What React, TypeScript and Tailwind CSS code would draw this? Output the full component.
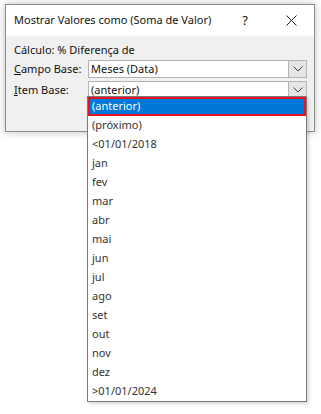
import React from "react"

const items = [
  "(anterior)",
  "(próximo)",
  "<01/01/2018",
  "jan",
  "fev",
  "mar",
  "abr",
  "mai",
  "jun",
  "jul",
  "ago",
  "set",
  "out",
  "nov",
  "dez",
  ">01/01/2024",
]

function Chevron() {
  return (
    <svg width="10" height="6" viewBox="0 0 10 6" className="text-[#444]">
      <path d="M0.5 0.5 L5 5 L9.5 0.5" fill="none" stroke="currentColor" strokeWidth="1" />
    </svg>
  )
}

function Combo({ value }: { value: string }) {
  return (
    <div className="flex h-[18px] w-[219px] border border-[#b4b4b4] bg-white">
      <div className="flex flex-1 items-center pl-[2px] text-[#111]">{value}</div>
      <div className="flex w-[18px] items-center justify-center border-l border-[#b4b4b4] bg-[#e5e5e5]">
        <Chevron />
      </div>
    </div>
  )
}

export default function App() {
  return (
    <div
      className="relative h-[414px] w-[321px] whitespace-nowrap bg-white text-[11px]"
      style={{ fontFamily: '"Noto Sans", "Open Sans", sans-serif' }}
    >
      <div className="absolute left-[5px] top-[4px] w-[310px] border border-[#8a8a8a] shadow-[0_0_8px_rgba(0,0,0,0.25)]">
        <div className="flex h-[31px] items-center bg-white pl-[8px] text-[11px] text-[#111]">
          <span className="flex-1">Mostrar Valores como (Soma de Valor)</span>
          <span className="w-[46px] text-center text-[13px]">?</span>
          <span className="flex w-[46px] justify-center">
            <svg width="11" height="11" viewBox="0 0 11 11">
              <path d="M0.5 0.5 L10.5 10.5 M10.5 0.5 L0.5 10.5" stroke="#222" strokeWidth="1" />
            </svg>
          </span>
        </div>
        <div className="h-[95px] bg-[#f0f0f0] pl-[8px] pt-[5px] text-[#111]">
          <div className="leading-[18px]">Cálculo: % Diferença de</div>
          <div className="mt-[1px] flex items-center">
            <span className="w-[74px]">
              <span className="underline">C</span>ampo Base:
            </span>
            <Combo value="Meses (Data)" />
          </div>
          <div className="mt-[3px] flex items-center">
            <span className="w-[74px]">
              <span className="underline">I</span>tem Base:
            </span>
            <Combo value="(anterior)" />
          </div>
        </div>
      </div>
      <div className="absolute left-[87px] top-[96px] w-[220px] border border-[#7a7a7a] bg-white shadow-[2px_2px_3px_rgba(0,0,0,0.15)]">
        {items.map((it, i) =>
          i === 0 ? (
            <div key={it} className="flex h-[19px] items-center border-2 border-[#e81123] bg-[#0078d7] pl-[2px] text-white">
              {it}
            </div>
          ) : (
            <div key={it} className="flex h-[19px] items-center pl-[4px] text-[#333]">
              {it}
            </div>
          )
        )}
      </div>
    </div>
  )
}
